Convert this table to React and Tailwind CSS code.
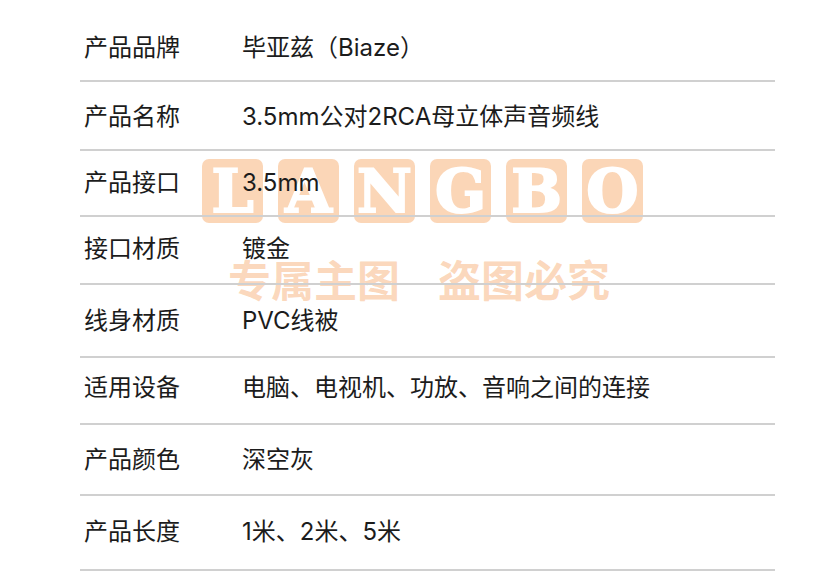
const rows = [
  { label: "产品品牌", value: "毕亚兹（Biaze）", cls: "h-[82px] pb-[16px]" },
  { label: "产品名称", value: "3.5mm公对2RCA母立体声音频线", cls: "h-[69px] pb-[16px]" },
  { label: "产品接口", value: "3.5mm", cls: "h-[66px] pb-[16px]" },
  { label: "接口材质", value: "镀金", cls: "h-[68px] pb-[18px]" },
  { label: "线身材质", value: "PVC线被", cls: "h-[73px] pb-[19px]" },
  { label: "适用设备", value: "电脑、电视机、功放、音响之间的连接", cls: "h-[67px] pb-[19px]" },
  { label: "产品颜色", value: "深空灰", cls: "h-[71px] pb-[18px]" },
  { label: "产品长度", value: "1米、2米、5米", cls: "h-[75px] pb-[21px]" },
];

const letters = ["L", "A", "N", "G", "B", "O"];

// watermark sits under the table text, like the faded stamp in the photo
function Watermark() {
  return (
    <div className="pointer-events-none absolute inset-0 z-0">
      <div className="absolute left-[202px] top-[159px] flex gap-[15px]">
        {letters.map((ch) => (
          <div
            key={ch}
            className="flex h-[64px] w-[61px] items-center justify-center rounded-[7px] bg-[#f6a45f]/45"
          >
            <span className="font-['DejaVu_Serif',serif] text-[60px] font-bold leading-none text-white [-webkit-text-stroke:2px_white]">
              {ch}
            </span>
          </div>
        ))}
      </div>
      <div className="absolute left-[228px] top-[252px] flex gap-[38px] font-['Noto_Sans_CJK_SC',sans-serif] text-[43px] font-bold leading-[52px] text-[#f6a86a]/45">
        <span>专属主图</span>
        <span>盗图必究</span>
      </div>
    </div>
  );
}

export default function App() {
  return (
    <div className="relative h-[580px] w-[836px] overflow-hidden bg-white font-['Inter','Noto_Sans_CJK_SC',sans-serif] text-[24px] text-[#1c1c1c]">
      <Watermark />
      <div className="relative z-10 ml-[80px] w-[695px]">
        {rows.map((row) => (
          <div
            key={row.label}
            className={`flex items-end border-b-2 border-[#d0d0d0] ${row.cls}`}
          >
            <div className="w-[162px] pl-[4px] leading-[32px]">{row.label}</div>
            <div className="leading-[32px]">{row.value}</div>
          </div>
        ))}
      </div>
    </div>
  );
}
